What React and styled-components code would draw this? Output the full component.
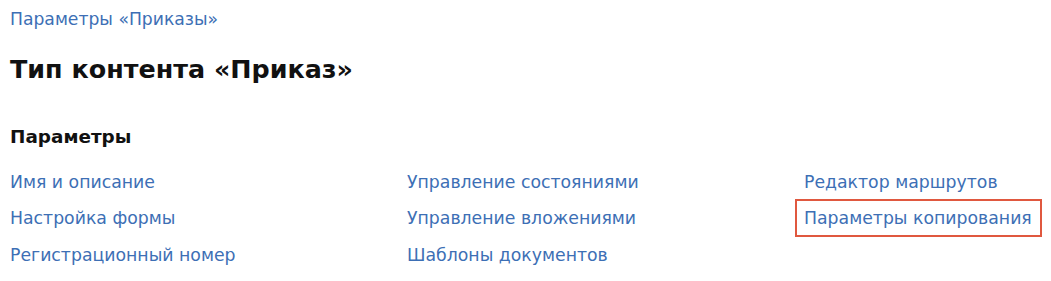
import React from "react";
import styled, { createGlobalStyle } from "styled-components";

const Global = createGlobalStyle`
  html, body { margin: 0; padding: 0; background: #fff; overflow: hidden; }
  body { font-family: "DejaVu Sans", "Liberation Sans", Arial, sans-serif; }
`;

const Page = styled.div`
  padding: 9px 10px 0 10px;
`;

const Breadcrumb = styled.a`
  display: block;
  font-size: 17.2px;
  line-height: 20px;
  color: #3d6fb5;
  text-decoration: none;
`;

const Title = styled.h1`
  margin: 24px 0 0 0;
  font-size: 25.4px;
  line-height: 32px;
  font-weight: 700;
  color: #111;
`;

const SectionTitle = styled.h2`
  margin: 40px 0 0 0;
  font-size: 18.4px;
  line-height: 24px;
  font-weight: 700;
  color: #111;
`;

const Grid = styled.div`
  display: grid;
  grid-template-columns: 397px 397px max-content;
  grid-auto-flow: column;
  grid-template-rows: 36px 36px 37px;
  margin-top: 15px;
`;

const Cell = styled.div`
  display: flex;
  align-items: center;
  white-space: nowrap;
`;

const Link = styled.a`
  font-size: 17.3px;
  line-height: 22px;
  color: #3d6fb5;
  text-decoration: none;
  white-space: nowrap;
  cursor: pointer;
  ${(p) =>
    p.$highlighted &&
    `
    margin-left: -9px;
    padding: 6px 8px 6px 7px;
    border: 2px solid #e0583f;
  `}
`;

const columns = [
  ["Имя и описание", "Настройка формы", "Регистрационный номер"],
  ["Управление состояниями", "Управление вложениями", "Шаблоны документов"],
  ["Редактор маршрутов", "Параметры копирования"],
];

export default function App() {
  return (
    <>
      <Global />
      <Page>
        <Breadcrumb>Параметры «Приказы»</Breadcrumb>
        <Title>Тип контента «Приказ»</Title>
        <SectionTitle>Параметры</SectionTitle>
        <Grid>
          {columns.map((col, ci) =>
            [0, 1, 2].map((ri) => (
              <Cell key={`${ci}-${ri}`}>
                {col[ri] && (
                  <Link $highlighted={col[ri] === "Параметры копирования"}>
                    {col[ri]}
                  </Link>
                )}
              </Cell>
            ))
          )}
        </Grid>
      </Page>
    </>
  );
}
